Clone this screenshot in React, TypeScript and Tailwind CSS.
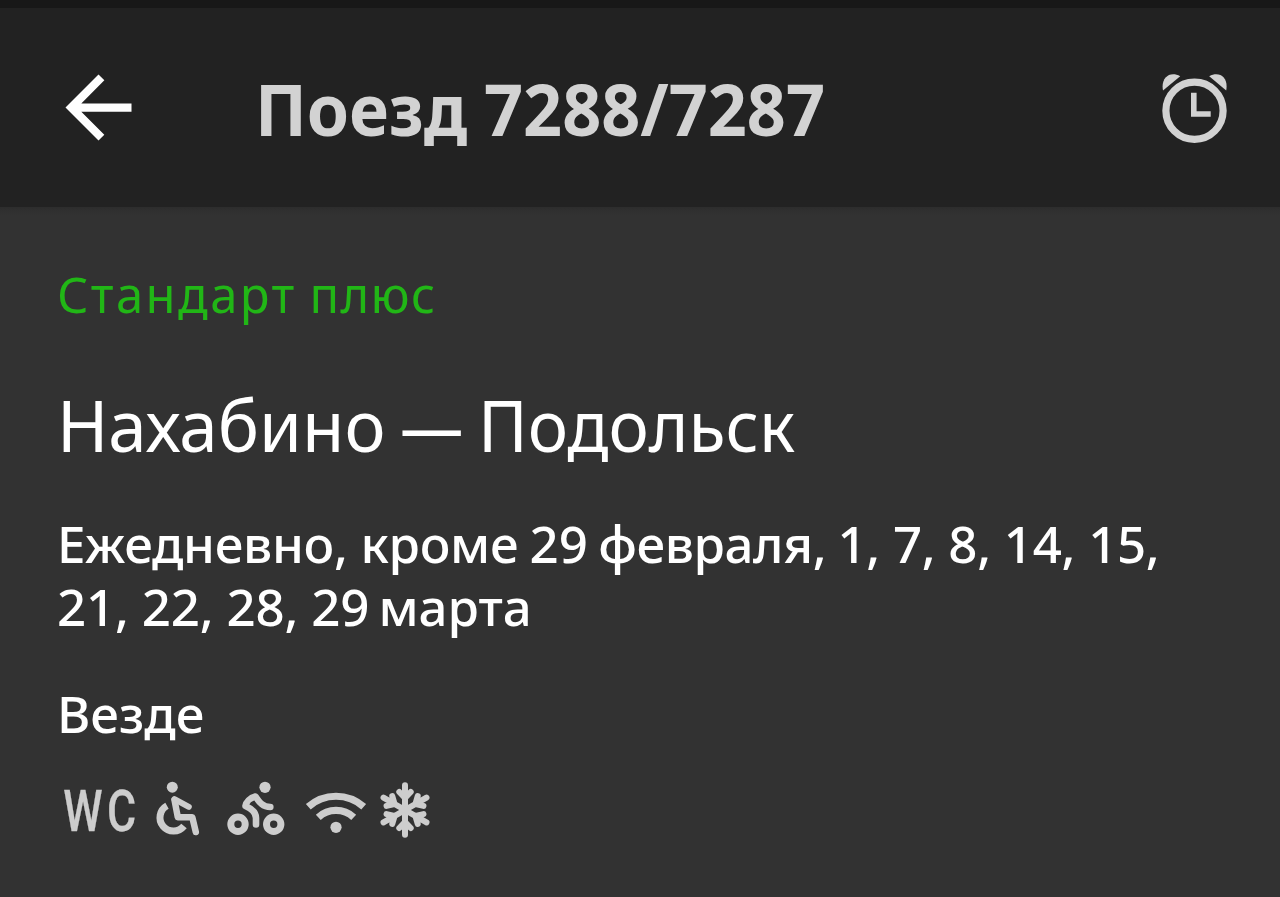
const ArrowBackIcon = () => (
  <svg width="99" height="99" viewBox="0 0 24 24" fill="currentColor" aria-hidden="true">
    <path d="M20 11H7.83l5.59-5.59L12 4l-8 8 8 8 1.41-1.41L7.83 13H20v-2z" />
  </svg>
);

const AlarmIcon = () => (
  <svg width="66" height="72" viewBox="0 0 66 72" fill="none" stroke="currentColor" aria-hidden="true">
    <circle cx="32.5" cy="38.8" r="28.6" strokeWidth="7.2" />
    <path d="M31.8 20.8v21.2h16.9" strokeWidth="5.6" />
    <path d="M1 18.5C-1.5 5.5 8-1.5 18.2 4.2Z" fill="currentColor" stroke="none" />
    <path d="M64.2 18.5C66.7 5.5 57.5-1.5 47.2 4.2Z" fill="currentColor" stroke="none" />
  </svg>
);

const WheelchairIcon = () => (
  <svg width="46" height="60" viewBox="0 0 46 60" fill="none" stroke="currentColor" strokeWidth="7" strokeLinecap="round" strokeLinejoin="round" aria-hidden="true">
    <circle cx="17.3" cy="7.2" r="5.5" fill="currentColor" stroke="none" />
    <path d="M19.5 19.2 33.8 26.8" strokeWidth="6" />
    <path d="M19.5 20 22.8 37.2H37.3L40.8 52" strokeWidth="6.5" />
    <path d="M12 25.7A13.5 13.5 0 1 0 29 46" strokeLinecap="butt" />
  </svg>
);

const BikeIcon = () => (
  <svg width="62" height="60" viewBox="0 0 62 60" fill="none" stroke="currentColor" strokeWidth="7" strokeLinecap="round" strokeLinejoin="round" aria-hidden="true">
    <circle cx="40" cy="7.3" r="5.6" fill="currentColor" stroke="none" />
    <circle cx="13" cy="44.3" r="7.2" />
    <circle cx="48.7" cy="44.3" r="7.2" />
    <path d="M45.3 27C38 27 34.5 22.5 30.5 16.5 25 18 21 22 20.5 26 25 28 31 31.5 31 38v6.5" strokeWidth="6.6" />
  </svg>
);

const WifiIcon = () => (
  <svg width="62" height="60" viewBox="0 0 62 60" fill="none" stroke="currentColor" strokeWidth="7.2" aria-hidden="true">
    <path d="M3.3 26.8A41.7 41.7 0 0 1 58.7 26.8" />
    <path d="M13.3 37.3A26 26 0 0 1 48.7 37.3" />
    <circle cx="31" cy="47.3" r="5.6" fill="currentColor" stroke="none" />
  </svg>
);

const SnowflakeIcon = () => (
  <svg width="54" height="60" viewBox="0 0 54 60" fill="none" stroke="currentColor" strokeWidth="6" strokeLinecap="round" aria-hidden="true">
    {[0, 60, 120, 180, 240, 300].map((angle) => (
      <path key={angle} d="M27 30V5.2M21.3 12l5.7 6 5.7-6" transform={`rotate(${angle} 27 30)`} />
    ))}
  </svg>
);

export default function App() {
  return (
    <div className="flex h-[897px] w-[1280px] flex-col overflow-hidden bg-[#323232] font-['Noto_Sans',sans-serif] text-white">
      <div className="h-2 shrink-0 bg-[#181818]" />
      <header className="flex h-[199px] shrink-0 items-center bg-[#222222] pl-[49px] pr-[52px] text-[#d2d2d2]">
        <button type="button" className="text-white" aria-label="Назад">
          <ArrowBackIcon />
        </button>
        <h1 className="ml-[107px] flex-1 whitespace-nowrap text-[72px] font-bold leading-[84px]">
          <span className="-mr-[14px] inline-block origin-left scale-x-[0.945]">Поезд</span>{" "}
          <span className="inline-block origin-left scale-x-[0.949]">7288/7287</span>
        </h1>
        <button type="button" aria-label="Напоминание">
          <AlarmIcon />
        </button>
      </header>
      <div className="h-2 shrink-0 bg-linear-to-b from-[#2d2d2d] to-[#323232]" />

      <main className="flex flex-col pl-[57px] pt-[51px]">
        <p className="whitespace-nowrap text-[49px] leading-[56px] text-[#21b616]">
          <span className="tracking-[2.4px]">Стандарт</span> <span className="tracking-[1.3px]">плюс</span>
        </p>
        <h2 className="mt-[60px] whitespace-nowrap text-[72px] leading-[84px]">
          <span className="-mr-[15px] inline-block origin-left scale-x-[0.96]">Нахабино</span>{" "}
          <span className="-ml-[3px] -mr-[13px] inline-block origin-left scale-x-[0.88]">—</span>{" "}
          <span className="inline-block origin-left scale-x-[0.942]">Подольск</span>
        </h2>
        <p className="mt-[46px] whitespace-nowrap text-[51px] font-medium leading-[63px]">
          <span className="tracking-[-0.3px]">Ежедневно, кроме</span> <span className="-ml-0.5">29</span>{" "}
          <span className="-ml-[3px] tracking-[-0.4px]">февраля,</span>{" "}
          <span className="-ml-0.5 tracking-[-0.3px]">1, 7, 8, 14, 15,</span>
          <br />
          <span className="tracking-[-0.2px]">21, 22, 28, 29</span> <span className="-ml-1">марта</span>
        </p>
        <p className="mt-[44px] text-[51px] font-medium leading-[63px]">Везде</p>

        <div className="mt-[35px] flex h-[60px] items-center text-[#cdcdcd]">
          <span className="w-[98px] origin-left scale-x-[0.77] whitespace-nowrap pl-2 pt-0.5 font-['Roboto',sans-serif] text-[58px] font-medium leading-[60px] tracking-[6px] [-webkit-text-stroke:0.3px_currentColor]">
            WC
          </span>
          <WheelchairIcon />
          <span className="ml-6"><BikeIcon /></span>
          <span className="ml-[18px]"><WifiIcon /></span>
          <span className="ml-[11px]"><SnowflakeIcon /></span>
        </div>
      </main>
    </div>
  );
}
